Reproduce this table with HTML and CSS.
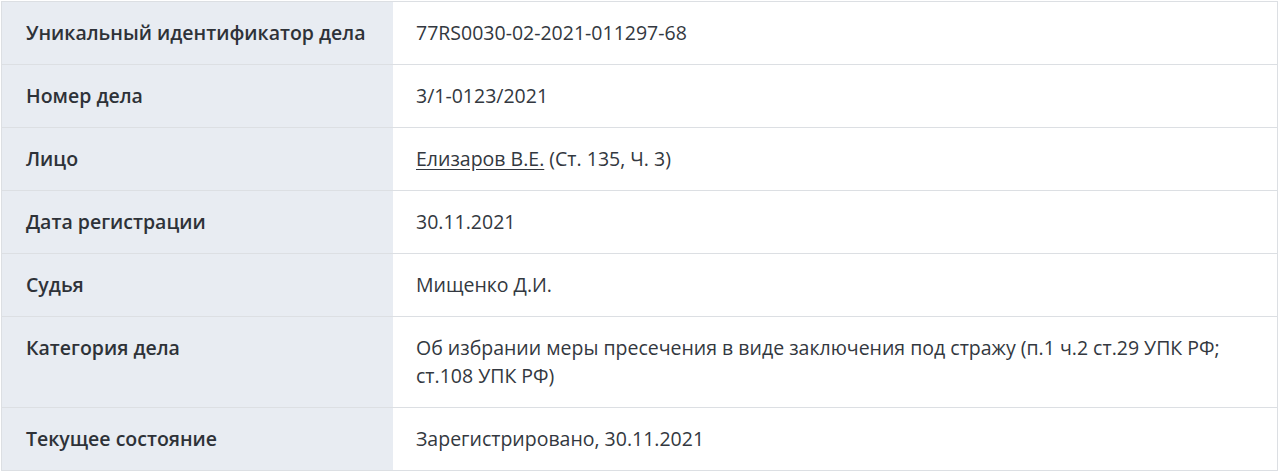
FILE: index.html
```html
<!DOCTYPE html>
<html lang="ru">
<head>
<meta charset="utf-8">
<link rel="stylesheet" href="styles.css">
</head>
<body>
<div class="card">
  <div class="row"><div class="label">Уникальный идентификатор дела</div><div class="value">77RS0030-02-2021-011297-68</div></div>
  <div class="row"><div class="label">Номер дела</div><div class="value">3/1-0123/2021</div></div>
  <div class="row"><div class="label">Лицо</div><div class="value"><a class="link" href="#">Елизаров В.Е.</a> (Ст. 135, Ч. 3)</div></div>
  <div class="row"><div class="label">Дата регистрации</div><div class="value">30.11.2021</div></div>
  <div class="row"><div class="label">Судья</div><div class="value">Мищенко Д.И.</div></div>
  <div class="row"><div class="label">Категория дела</div><div class="value">Об избрании меры пресечения в виде заключения под стражу (п.1 ч.2 ст.29 УПК РФ; ст.108 УПК РФ)</div></div>
  <div class="row last"><div class="label">Текущее состояние</div><div class="value">Зарегистрировано, 30.11.2021</div></div>
</div>
</body>
</html>
```
FILE: styles.css
```css
html, body {
  margin: 0;
  padding: 0;
  background: #ffffff;
}
body {
  padding: 1px 2px 1px 1px;
  font-family: "Open Sans", "Liberation Sans", sans-serif;
  font-size: 19.5px;
  line-height: 28px;
  color: #333840;
}
.card {
  border: 1px solid #dcdfe3;
}
.row {
  display: grid;
  grid-template-columns: 391px 1fr;
  border-bottom: 1px solid #dcdfe3;
}
.row.last {
  border-bottom: none;
}
.label {
  background: #e8ecf2;
  padding: 17px 24px;
  font-weight: 600;
  color: #2e3238;
}
.value {
  padding: 17px 23px;
}
.link {
  color: #333840;
  text-decoration: underline;
  text-underline-offset: 3px;
}
```
